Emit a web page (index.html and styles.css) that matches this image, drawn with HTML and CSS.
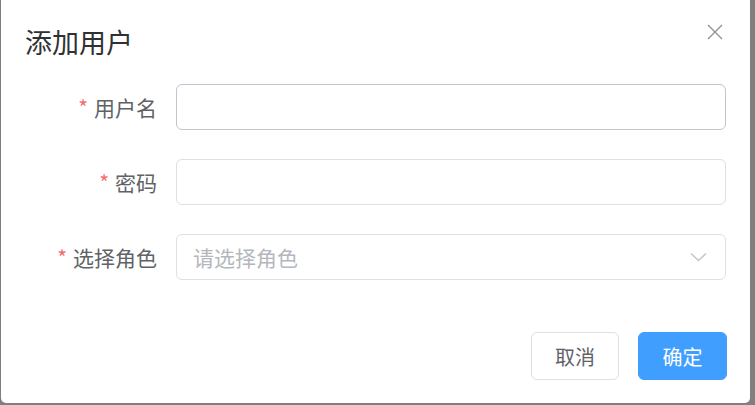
FILE: index.html
```html
<!DOCTYPE html>
<html lang="zh-CN">
<head>
<meta charset="utf-8">
<link rel="stylesheet" href="styles.css">
</head>
<body>
<div class="dialog">
  <div class="dialog-header">
    <span class="dialog-title">添加用户</span>
    <button class="dialog-close" aria-label="关闭">
      <svg width="16" height="16" viewBox="0 0 16 16"><path d="M1 1L15 15M15 1L1 15" stroke="#909399" stroke-width="1.4" fill="none"/></svg>
    </button>
  </div>
  <form class="form">
    <div class="form-item">
      <label class="form-label"><span class="req">*</span>用户名</label>
      <div class="form-control"><input class="input input-active" type="text"></div>
    </div>
    <div class="form-item">
      <label class="form-label"><span class="req">*</span>密码</label>
      <div class="form-control"><input class="input" type="password"></div>
    </div>
    <div class="form-item">
      <label class="form-label"><span class="req">*</span>选择角色</label>
      <div class="form-control">
        <div class="select">
          <span class="placeholder">请选择角色</span>
          <svg class="arrow" width="17" height="10" viewBox="0 0 17 10"><path d="M1 1.5L8.5 8.5L16 1.5" stroke="#c0c4cc" stroke-width="1.4" fill="none"/></svg>
        </div>
      </div>
    </div>
  </form>
  <div class="dialog-footer">
    <button class="btn">取消</button>
    <button class="btn btn-primary">确定</button>
  </div>
</div>
</body>
</html>
```

FILE: styles.css
```css
* { box-sizing: border-box; }
html, body { margin: 0; padding: 0; }
body {
  background: #7f7f7f;
  width: 755px;
  height: 405px;
  overflow: hidden;
  font-family: "Noto Sans CJK SC", "Noto Sans", sans-serif;
}
.dialog {
  position: relative;
  margin: -4px 0 0 1px;
  width: 749px;
  height: 407px;
  background: #fff;
  border-radius: 5px;
  padding: 4px 24px 0 24px;
}
.dialog-header {
  padding-top: 24px;
  height: 84px;
}
.dialog-title {
  display: block;
  font-size: 27px;
  line-height: 36px;
  color: #303133;
}
.dialog-close {
  position: absolute;
  top: 28px;
  right: 27px;
  width: 16px;
  height: 16px;
  padding: 0;
  border: 0;
  background: none;
  display: flex;
}
.form {
  display: flex;
  flex-direction: column;
  gap: 29px;
}
.form-item {
  display: flex;
  align-items: center;
  height: 46px;
}
.form-label {
  width: 151px;
  flex: none;
  padding-right: 19px;
  text-align: right;
  font-size: 21px;
  color: #606266;
  line-height: 46px;
}
.req {
  color: #f56c6c;
  margin-right: 6px;
}
.form-control { flex: 1; }
.input, .select {
  display: flex;
  align-items: center;
  width: 100%;
  height: 46px;
  border: 1px solid #dcdfe6;
  border-radius: 6px;
  background: #fff;
  padding: 0 16px;
  font-size: 21px;
  font-family: inherit;
  outline: none;
}
.input-active { border-color: #c0c4cc; }
.select { justify-content: space-between; padding-right: 18px; }
.placeholder { color: #b4b7bd; }
.dialog-footer {
  display: flex;
  justify-content: flex-end;
  gap: 19px;
  margin-top: 52px;
  margin-right: -1px;
}
.btn {
  width: 88px;
  height: 48px;
  border: 1px solid #dcdfe6;
  border-radius: 6px;
  background: #fff;
  color: #606266;
  font-size: 20px;
  font-family: inherit;
  padding: 0;
}
.btn-primary {
  background: #409eff;
  border-color: #409eff;
  color: #fff;
  width: 89px;
}
```
